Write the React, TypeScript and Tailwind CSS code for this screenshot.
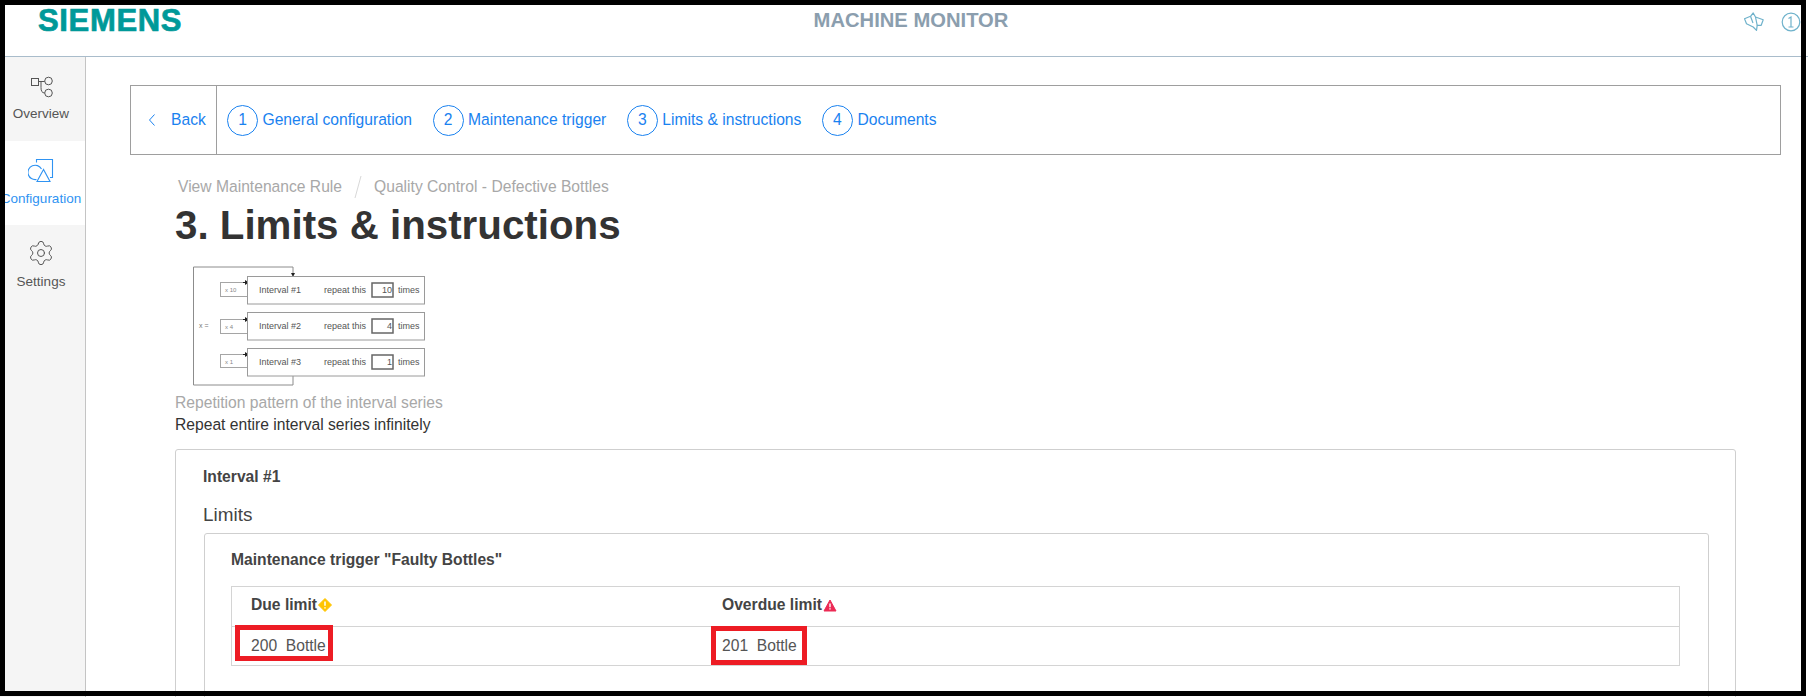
import { Settings } from "lucide-react"

const steps = [
  { n: 1, label: "General configuration" },
  { n: 2, label: "Maintenance trigger" },
  { n: 3, label: "Limits & instructions" },
  { n: 4, label: "Documents" },
]

const intervals = [
  { y: 277, boxY: 283, boxH: 14, x: "x 10", name: "Interval #1", count: "10" },
  { y: 313, boxY: 320, boxH: 14, x: "x 4", name: "Interval #2", count: "4" },
  { y: 349, boxY: 355, boxH: 13, x: "x 1", name: "Interval #3", count: "1" },
]

function RepetitionDiagram() {
  return (
    <svg width="240" height="125" viewBox="190 265 240 125" className="block ml-[15px]" fontFamily="Liberation Sans, sans-serif">
      <path d="M293 276V268H193.5V386H293V377" fill="none" stroke="#8c8c8c" />
      <path d="M291 274h4l-2 4z" fill="#222" />
      <text x="199" y="329" fontSize="7" fill="#777">x =</text>
      {intervals.map((row) => (
        <g key={row.name}>
          <rect x="220.5" y={row.boxY + 0.5} width="28" height={row.boxH} fill="#fff" stroke="#a5a5a5" />
          <path d={`M243 ${row.boxY + 0.5}h5`} stroke="#222" />
          <path d={`M245 ${row.boxY - 2}l4 2.5-4 2.5z`} fill="#222" />
          <text x="225" y={row.boxY + 9.5} fontSize="6" fill="#888">{row.x}</text>
          <rect x="247.5" y={row.y + 0.5} width="177" height="27.5" fill="#fff" stroke="#9a9a9a" />
          <text x="259" y={row.y + 17} fontSize="9" fill="#555">{row.name}</text>
          <text x="324" y={row.y + 17} fontSize="9" fill="#555">repeat this</text>
          <rect x="372" y={row.y + 7} width="21" height="14" fill="#fff" stroke="#666" strokeWidth="1.5" />
          <text x="392" y={row.y + 17} fontSize="9" textAnchor="end" fill="#555">{row.count}</text>
          <text x="398" y={row.y + 17} fontSize="9" fill="#555">times</text>
        </g>
      ))}
    </svg>
  )
}

function OverviewIcon() {
  return (
    <svg width="26" height="24" viewBox="0 0 26 24" fill="none" stroke="#555" strokeWidth="1">
      <rect x="3.5" y="2.5" width="7" height="7" />
      <circle cx="20.5" cy="5" r="3.8" />
      <circle cx="20.5" cy="17" r="3.8" />
      <path d="M10.5 5.5h6.2M13 5.5v6c0 3.5 1 5.5 3.7 5.5" />
    </svg>
  )
}

function ConfigIcon() {
  return (
    <svg width="26" height="24" viewBox="0 0 26 24" fill="none" stroke="#2f93f2" strokeWidth="1.1">
      <path d="M8.5 3.5V0.5H24.5V18.5H22" />
      <path d="M13.5 10a7.2 7.2 0 1 0 -5 10.5" />
      <path d="M15.5 10.5L9 22.5H22Z" />
    </svg>
  )
}

function DueIcon() {
  return (
    <svg width="14" height="14" viewBox="0 0 14 14" className="ml-px shrink-0">
      <path d="M7 .5 13.5 7 7 13.5.5 7Z" fill="#ffc400" stroke="#ffc400" strokeLinejoin="round" />
      <path d="M7 3.5v4.2M7 9.2v1.2" stroke="#fff" strokeWidth="1.5" />
    </svg>
  )
}

function OverdueIcon() {
  return (
    <svg width="14" height="13" viewBox="0 0 14 13" className="ml-px shrink-0">
      <path d="M7 1 13 12H1Z" fill="#ec2a55" stroke="#ec2a55" strokeLinejoin="round" />
      <path d="M7 4.5v3.7M7 9.3v1.2" stroke="#fff" strokeWidth="1.4" />
    </svg>
  )
}

export default function App() {
  return (
    <div className="relative h-[697px] w-[1808px] overflow-hidden bg-white font-['Liberation_Sans',sans-serif] text-[#333]">
      <header className="grid h-[57px] grid-cols-[1fr_auto_1fr] border-b border-[#a9bccb] pl-[14px]">
        <div className="pl-[24px] pt-[3px] text-[31px] leading-[36px] font-bold tracking-[0.65px] text-[#009999] [-webkit-text-stroke:0.7px_#009999]">SIEMENS</div>
        <div className="pt-[8px] text-[20.2px] leading-[24px] font-bold text-[#8b9eae]">MACHINE MONITOR</div>
        <div className="flex items-start justify-end gap-[17px] pt-[12px] pr-[7px]">
          <svg width="20" height="20" viewBox="0 0 20 20" fill="none" stroke="#6fb2cb" strokeWidth="1.2" strokeLinejoin="round">
            <path d="M.5 6.7 6.5 4.3 9.2 1l2.3 4 7.7 2.7-2 5.6h-4l-.7 5-3.3-3.3-6.7-3.3Z" />
            <path d="M6.5 4.3 9 11M11.5 5l1.7 8.3" />
          </svg>
          <svg width="20" height="20" viewBox="0 0 20 20" fill="none" stroke="#6fb2cb" strokeWidth="1.2">
            <circle cx="10" cy="10" r="8.8" />
            <path d="M7.5 6.5 10 5v10M7.5 15h5" />
          </svg>
        </div>
      </header>

      <div className="flex h-[640px]">
        <aside className="w-[86px] shrink-0 border-r border-[#c4c4c4] bg-[#f5f5f5] text-[13.5px] leading-[16px] text-[#555]">
          <div className="flex h-[84px] flex-col items-center pt-[19px] pr-[3px]">
            <OverviewIcon />
            <span className="mt-[6px]">Overview</span>
          </div>
          <div className="flex h-[84px] flex-col items-center bg-white pt-[18px] pr-[3px] text-[#2f93f2]">
            <ConfigIcon />
            <span className="mt-[8px] whitespace-nowrap">Configuration</span>
          </div>
          <div className="flex h-[84px] flex-col items-center pt-[14px] pr-[3px]">
            <Settings size={28} strokeWidth={0.85} />
            <span className="mt-[7px]">Settings</span>
          </div>
        </aside>

        <main className="flex-1 pl-[44px]">
          <nav className="mt-[28px] flex h-[70px] w-[1651px] items-center border border-[#9e9e9e] text-[15.65px] text-[#1a82f0]">
            <div className="flex h-full w-[86px] shrink-0 items-center border-r border-[#9e9e9e] pl-[17px]">
              <svg width="8" height="14" viewBox="0 0 8 14" fill="none" stroke="#1a82f0" strokeWidth="1">
                <path d="M6.5 1.5 1.5 7l5 5.5" />
              </svg>
              <span className="ml-[15px]">Back</span>
            </div>
            <div className="flex gap-[20.5px] pl-[10px]">
              {steps.map((s) => (
                <div key={s.n} className="flex items-center gap-[4.5px]">
                  <span className="flex h-[31px] w-[31px] items-center justify-center rounded-full border border-[#1a82f0]">{s.n}</span>
                  <span>{s.label}</span>
                </div>
              ))}
            </div>
          </nav>

          <div className="mt-[20px] flex items-center pl-[48px] text-[15.65px] leading-[20px] text-[#a8a8a8]">
            <span>View Maintenance Rule</span>
            <svg width="10" height="24" viewBox="0 0 10 24" className="mx-[11px]" stroke="#d8d8d8">
              <path d="M8 1 2 23" />
            </svg>
            <span>Quality Control - Defective Bottles</span>
          </div>

          <h1 className="mt-[3px] pl-[45px] text-[40.3px] leading-[48px] font-bold text-[#333]">3. Limits &amp; instructions</h1>

          <div className="mt-[14px] pl-[45px]">
            <RepetitionDiagram />
            <p className="mt-[3px] text-[15.65px] leading-[22px] text-[#a8a8a8]">Repetition pattern of the interval series</p>
            <p className="text-[15.65px] leading-[22px] text-[#333]">Repeat entire interval series infinitely</p>
          </div>

          <section className="mt-[13px] ml-[45px] w-[1561px] rounded-[3px] border border-[#cfcfcf] pt-[16px] pr-[26px] pb-[40px] pl-[27px]">
            <h3 className="text-[15.65px] leading-[22px] font-bold text-[#444]">Interval #1</h3>
            <h4 className="mt-[15px] text-[18.9px] leading-[24px] text-[#444]">Limits</h4>
            <div className="mt-[6px] ml-px w-[1505px] rounded-[3px] border border-[#cfcfcf] pt-[15px] pr-[27px] pb-[40px] pl-[26px]">
              <h5 className="text-[15.65px] leading-[22px] font-bold text-[#444]">Maintenance trigger &quot;Faulty Bottles&quot;</h5>
              <div className="mt-[15px] w-[1449px] border border-[#d4d4d4] text-[15.65px] leading-[20px]">
                <div className="grid h-[40px] grid-cols-[471px_1fr] items-center border-b border-[#d4d4d4] pb-[3px] font-bold text-[#444]">
                  <div className="flex items-center pl-[19px]">Due limit<DueIcon /></div>
                  <div className="flex items-center pl-[19px]">Overdue limit<OverdueIcon /></div>
                </div>
                <div className="relative grid h-[38px] grid-cols-[471px_1fr] items-center whitespace-pre text-[#555]">
                  <div className="pl-[19px]">200  Bottle</div>
                  <div className="pl-[19px]">201  Bottle</div>
                  <div className="absolute top-[-2px] left-[3px] h-[36px] w-[98px] border-[5px] border-[#ed1c24]" />
                  <div className="absolute top-[-1px] left-[479px] h-[39px] w-[96px] border-[5px] border-[#ed1c24]" />
                </div>
              </div>
            </div>
          </section>
        </main>
      </div>

      {/* black frame around the capture */}
      <div className="pointer-events-none absolute top-0 left-0 h-[696px] w-[1806px] border-[5px] border-black" />
    </div>
  )
}
